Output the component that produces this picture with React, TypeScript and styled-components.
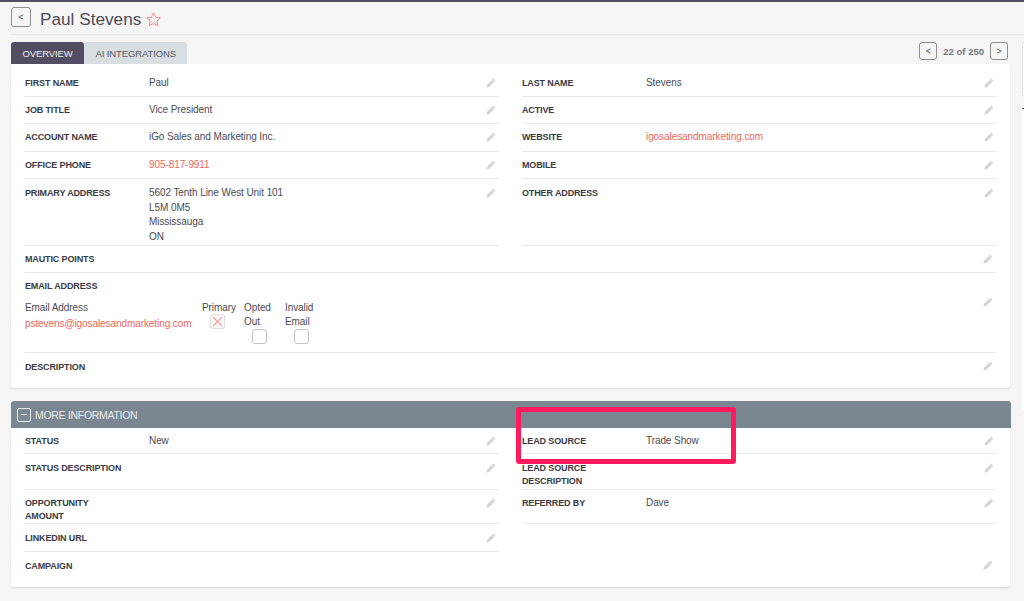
import React from "react";
import styled, { createGlobalStyle } from "styled-components";

const Global = createGlobalStyle`
  html, body { margin: 0; padding: 0; background: #f5f5f5; }
  body { font-family: "Liberation Sans", Arial, sans-serif; width: 1024px; height: 601px; overflow: hidden; }
`;

const Page = styled.div`
  position: relative;
  width: 1024px;
  height: 601px;
  border-top: 2px solid #534d64;
  box-sizing: border-box;
  background: #f5f5f5;
  overflow: hidden;
`;
const Header = styled.div`
  display: flex;
  align-items: center;
  gap: 9px;
  height: 32px;
  margin: 0 0 0 11px;
  border-bottom: 1px solid #e6e6e6;
  box-sizing: content-box;
`;
const SquareBtn = styled.button`
  width: 18px;
  height: 18px;
  padding: 0;
  border: 1px solid #8f8f8f;
  border-radius: 3px;
  background: #f5f5f5;
  color: #777;
  font: bold 8.5px "Liberation Sans", sans-serif;
  box-sizing: border-box;
`;
const BackBtn = styled(SquareBtn)`
  width: 20px;
  height: 20px;
  margin-bottom: 2px;
`;
const Title = styled.h1`
  margin: 2px 0 0;
  font-weight: 400;
  font-size: 17.2px;
  color: #4c4a55;
  display: flex;
  align-items: center;
  gap: 4px;
`;
const TabBar = styled.div`
  display: flex;
  align-items: flex-end;
  height: 29px;
  padding: 0 16px 0 11px;
`;
const Tab = styled.div<{ $active?: boolean }>`
  height: 22px;
  padding: 0 11.5px;
  display: flex;
  align-items: center;
  font-size: 9.5px;
  letter-spacing: -0.12px;
  border-radius: 3px 3px 0 0;
  background: ${(p) => (p.$active ? "#534d64" : "#d8dde1")};
  color: ${(p) => (p.$active ? "#eeeeee" : "#555a66")};
`;
const Pager = styled.div`
  margin-left: auto;
  align-self: flex-start;
  margin-top: 7px;
  display: flex;
  align-items: center;
  gap: 6px;
  font-size: 9.5px;
  font-weight: 700;
  color: #777;
`;
const Panel = styled.div<{ $top?: boolean }>`
  margin: 0 14px 0 11px;
  padding: ${(p) => (p.$top ? "6px 14px 0" : "1px 14px 0")};
  background: #fff;
  box-shadow: 0 1px 2px rgba(0, 0, 0, 0.12);
  border-radius: 0 0 3px 3px;
  box-sizing: border-box;
  height: ${(p) => (p.$top ? "324px" : "159px")};
`;
const Row = styled.div`
  display: grid;
  grid-template-columns: 474px 475px;
  column-gap: 23px;
`;
const Cell = styled.div<{ $h: number; $pt: number }>`
  position: relative;
  height: ${(p) => p.$h}px;
  display: grid;
  grid-template-columns: 124px 1fr;
  box-sizing: border-box;
  padding-top: ${(p) => p.$pt}px;
  border-bottom: 1px solid #e9e9e9;
`;
const Wide = styled.div<{ $h: number; $noLine?: boolean; $pt?: number }>`
  position: relative;
  height: ${(p) => p.$h}px;
  box-sizing: border-box;
  padding-top: ${(p) => p.$pt ?? 7}px;
  border-bottom: ${(p) => (p.$noLine ? "none" : "1px solid #e9e9e9")};
`;
const Label = styled.div`
  font-size: 9px;
  letter-spacing: -0.13px;
  font-weight: 700;
  line-height: 13px;
  color: #3a3a44;
  text-transform: uppercase;
  white-space: pre-line;
`;
const Value = styled.div`
  font-size: 10px;
  letter-spacing: -0.08px;
  line-height: 14.5px;
  margin-top: -1px;
  color: #4a4a52;
  white-space: pre-line;
`;
const Link = styled.span`
  color: #f2645a;
`;
const PencilWrap = styled.span<{ $top: number }>`
  position: absolute;
  right: 3px;
  top: ${(p) => p.$top}px;
  display: flex;
`;
const Section = styled.div`
  display: flex;
  align-items: center;
  gap: 4px;
  height: 27px;
  margin: 13px 13px 0 11px;
  padding-left: 6px;
  background: #7a8791;
  border-radius: 3px 3px 0 0;
  color: #e8ecee;
  font-size: 10.5px;
  letter-spacing: -0.3px;
`;
const Toggle = styled.span`
  width: 14px;
  height: 14px;
  border: 1px solid #e8ecee;
  border-radius: 2px;
  box-sizing: border-box;
  display: flex;
  align-items: center;
  justify-content: center;
  &::before { content: ""; width: 6px; height: 1px; background: #e8ecee; }
`;
const EmailGrid = styled.div`
  display: flex;
  margin-top: 8px;
  font-size: 10px;
  letter-spacing: -0.08px;
  line-height: 14px;
  color: #4a4a52;
`;
const EmailCol = styled.div<{ $w: number }>`
  width: ${(p) => p.$w}px;
  flex: none;
`;
const EmailLink = styled(Link)`
  display: block;
  margin-top: 2px;
`;
const Check = styled.span<{ $on?: boolean; $ml: number }>`
  display: flex;
  width: 15px;
  height: 15px;
  margin-left: ${(p) => p.$ml}px;
  margin-top: ${(p) => (p.$on ? -1 : 0)}px;
  border: 1px solid ${(p) => (p.$on ? "#e2dcdc" : "#c4c4c4")};
  border-radius: 3px;
  box-sizing: border-box;
  align-items: center;
  justify-content: center;
  background: ${(p) => (p.$on ? "#fbf7f7" : "#fff")};
`;
const Annotation = styled.div`
  position: absolute;
  left: 516px;
  top: 405px;
  width: 220px;
  height: 57px;
  border: 5.5px solid #ff1a5e;
  border-radius: 3px;
  box-sizing: border-box;
`;
const Sliver = styled.div`
  position: absolute;
  right: 0;
  top: 40px;
  width: 2px;
  height: 54px;
  background: #fff;
  border: 1px solid #e4e4e4;
  border-right: 0;
  box-sizing: border-box;
`;
const SliverLow = styled.div`
  position: absolute;
  right: 0;
  top: 106px;
  width: 2px;
  height: 300px;
  background: #fff;
  border-top: 1px solid #534d64;
`;

const Pencil = ({ top = 8 }: { top?: number }) => (
  <PencilWrap $top={top}>
    <svg width="10" height="10" viewBox="0 0 10 10">
      <path d="M7.3.6 9.4 2.7 3.2 8.900.4 9.600l.7-2.800z" fill="#d4d4d4" />
      <path d="M6.200 1.900 8.200 3.900" stroke="#fff" strokeWidth=".5" />
    </svg>
  </PencilWrap>
);
const F = ({ label, value, h, pt = 7 }: { label?: string; value?: React.ReactNode; h: number; pt?: number }) => (
  <Cell $h={h} $pt={pt}>
    <Label>{label}</Label>
    <Value>{value}</Value>
    <Pencil top={pt + 1} />
  </Cell>
);

export default function App() {
  return (
    <Page>
      <Global />
      <Header>
        <BackBtn>&lt;</BackBtn>
        <Title>
          Paul Stevens
          <svg width="17" height="17" viewBox="0 0 24 24" fill="none" stroke="#f2857d" strokeWidth="1.300">
            <path d="M12 2.500l2.900 6.400 6.900.7-5.200 4.600 1.500 6.800L12 17.500 5.900 20.900l1.500-6.800L2.200 9.600l6.900-.7z" />
          </svg>
        </Title>
      </Header>
      <TabBar>
        <Tab $active>OVERVIEW</Tab>
        <Tab>AI INTEGRATIONS</Tab>
        <Pager>
          <SquareBtn>&lt;</SquareBtn>
          22 of 250
          <SquareBtn>&gt;</SquareBtn>
        </Pager>
      </TabBar>
      <Panel $top>
        <Row>
          <F label="First Name" value="Paul" h={27} />
          <F label="Last Name" value="Stevens" h={27} />
        </Row>
        <Row>
          <F label="Job Title" value="Vice President" h={27} />
          <F label="Active" h={27} />
        </Row>
        <Row>
          <F label="Account Name" value="iGo Sales and Marketing Inc." h={28} />
          <F label="Website" value={<Link>igosalesandmarketing.com</Link>} h={28} />
        </Row>
        <Row>
          <F label="Office Phone" value={<Link>905-817-9911</Link>} h={27} />
          <F label="Mobile" h={27} />
        </Row>
        <Row>
          <F label="Primary Address" value={"5602 Tenth Line West Unit 101\nL5M 0M5\nMississauga\nON"} h={67} pt={8} />
          <F label="Other Address" h={67} pt={8} />
        </Row>
        <Wide $h={27}>
          <Label>Mautic Points</Label>
          <Pencil />
        </Wide>
        <Wide $h={80}>
          <Label>Email Address</Label>
          <EmailGrid>
            <EmailCol $w={177}>
              Email Address
              <EmailLink>pstevens@igosalesandmarketing.com</EmailLink>
            </EmailCol>
            <EmailCol $w={42}>
              Primary
              <Check $ml={8} $on>
                <svg width="11" height="11" viewBox="0 0 11 11" stroke="#f5a29b" strokeWidth="1.100">
                  <path d="M1 1l9 9M10 1l-9 9" />
                </svg>
              </Check>
            </EmailCol>
            <EmailCol $w={41}>
              Opted
              <br />
              Out
              <Check $ml={8} />
            </EmailCol>
            <EmailCol $w={42}>
              Invalid
              <br />
              Email
              <Check $ml={9} />
            </EmailCol>
          </EmailGrid>
          <Pencil top={24} />
        </Wide>
        <Wide $h={36} $noLine $pt={8}>
          <Label>Description</Label>
          <Pencil />
        </Wide>
      </Panel>
      <Section>
        <Toggle />
        MORE INFORMATION
      </Section>
      <Panel>
        <Row>
          <F label="Status" value="New" h={25} pt={6} />
          <F label="Lead Source" value="Trade Show" h={25} pt={6} />
        </Row>
        <Row>
          <F label="Status Description" h={36} pt={8} />
          <F label={"Lead Source\nDescription"} h={36} pt={8} />
        </Row>
        <Row>
          <F label={"Opportunity\nAmount"} h={34} pt={7} />
          <F label="Referred By" value="Dave" h={34} pt={7} />
        </Row>
        <Row>
          <F label="LinkedIn URL" h={28} pt={8} />
          <div />
        </Row>
        <Wide $h={30} $noLine $pt={8}>
          <Label>Campaign</Label>
          <Pencil />
        </Wide>
      </Panel>
      <Sliver />
      <SliverLow />
      <Annotation />
    </Page>
  );
}
